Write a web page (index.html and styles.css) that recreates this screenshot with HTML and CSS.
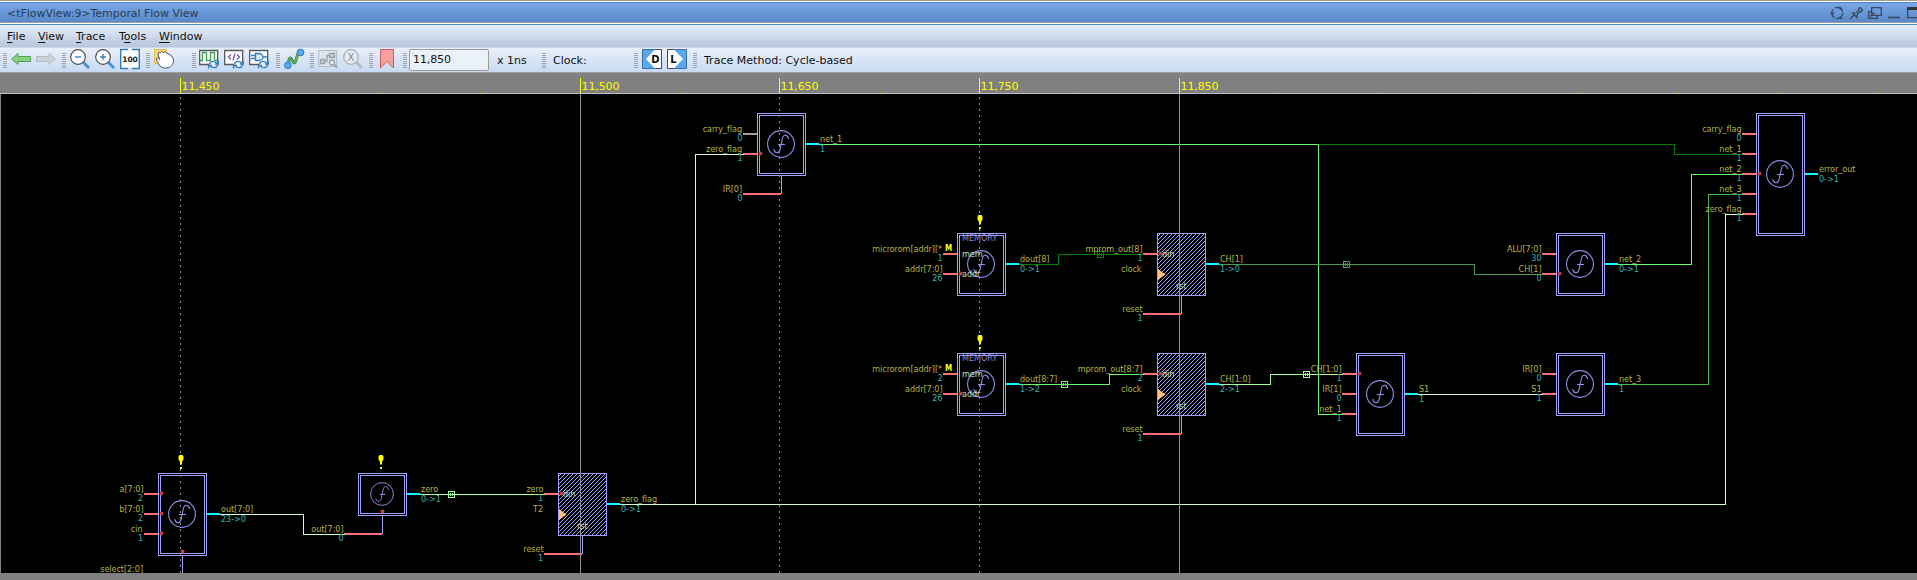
FILE: index.html
```html
<!DOCTYPE html>
<html lang="en">
<head>
<meta charset="utf-8">
<title>Temporal Flow View</title>
<link rel="stylesheet" href="styles.css">
</head>
<body>
<div class="window">
  <header class="titlebar">
    <span class="title">&lt;tFlowView:9&gt;Temporal Flow View</span>
    <svg class="controls" width="87" height="14" viewBox="0 0 87 14">
      <g fill="none" stroke="#39485c" stroke-width="1.3">
        <circle cx="7.300" cy="7" r="5.500" stroke-dasharray="9.500 2"/>
        <path d="M.8 6.500l1.400 2 1.600-1.800M9.500.8l1.800 1.800-1.800 1M10 10.500l.5 2 2-.8" stroke-width="1.200"/>
        <path d="M20 13l4-4M22 6.500l5.500 5.500M23 7.500l3.500-1L29 4l-.5-1.500L30 1.500 32.500 4l-1 1.500L30 5.500 27.500 8l-1 3"/>
        <path d="M41.700 1.700h9.600v7.600h-9.600zM41 5.700h-2.300v6.600h8.600V10M40.500 10.500l4-4"/>
        <path d="M58 11.500h12" stroke-width="1.600"/>
        <path d="M77.700 1.700h12v10h-12z"/><path d="M77 2.500h12" stroke-width="3" stroke="#333"/>
      </g>
    </svg>
  </header>
  <nav class="menubar">
    <span class="m-file"><u>F</u>ile</span><span class="m-view"><u>V</u>iew</span><span class="m-trace"><u>T</u>race</span><span class="m-tools">T<u>o</u>ols</span><span><u>W</u>indow</span>
  </nav>
  <div class="toolbar">
    <div class="group g-nav"><i class="grip"></i>
      <svg width="20" height="22" viewBox="0 0 20 22"><path d="M.7 11L7 5.500V8.500h12.500v5H7v3z" fill="#86d17f" stroke="#4c9e55"/></svg>
      <svg width="20" height="22" viewBox="0 0 20 22"><path d="M19.300 11L13 5.500V8.500H.5v5H13v3z" fill="#cdd2d8" stroke="#b4bac2"/></svg>
    </div>
    <div class="group g-zoom"><i class="grip"></i>
      <svg width="20" height="22" viewBox="0 0 20 22"><path d="M13 14l6 6" stroke="#4a94d6" stroke-width="3"/><circle cx="8" cy="9" r="7.300" fill="#fff" stroke="#4c5057" stroke-width="1.200"/><path d="M5 9h6" stroke="#2e7cc4" stroke-width="1.300"/></svg>
      <svg width="20" height="22" viewBox="0 0 20 22"><path d="M13 14l6 6" stroke="#4a94d6" stroke-width="3"/><circle cx="8" cy="9" r="7.300" fill="#fff" stroke="#4c5057" stroke-width="1.200"/><path d="M5 9h6M8 6v6" stroke="#2e7cc4" stroke-width="1.300"/></svg>
      <svg width="20" height="22" viewBox="0 0 20 22"><path d="M8 1.500H.700V20.500H8M12 1.500h7.300v19H12" fill="#fff" stroke="#2e7cb8" stroke-width="1.400"/><path d="M8 2h4v18H8z" fill="#f2f7fc"/><text x="10" y="14" text-anchor="middle" class="hundred">100</text></svg>
    </div>
    <div class="group g-hand"><i class="grip"></i>
      <svg width="22" height="22" viewBox="0 0 22 22"><path d="M1.500 1.500h12v14h-12z" fill="#ffd978" stroke="#d8a830" stroke-dasharray="2 1"/><path d="M7 18C5 15 3 12 3.500 10.500S6 10 6.500 11.500L5 6c0-2 2-2 2.500-1 0-2 2.500-2 3 0 .5-2 3-1 3 .5C15 4.500 16 6 16 7c2-.500 4 2 4.500 5 .5 4-3 8-7 8-3 0-5-.500-6.500-2z" fill="#fff" stroke="#4c5057"/></svg>
    </div>
    <div class="group g-views"><i class="grip"></i>
      <svg width="20" height="22" viewBox="0 0 20 22"><path d="M.700 2.500h18v14H.700z" fill="#fff" stroke="#555a60" stroke-width="1.300"/><path d="M1 12.500h2.500v-8h4v8h4v-8h4v8H18" fill="none" stroke="#3f9a52" stroke-width="1.300"/><circle cx="14.500" cy="16.500" r="4" fill="#eaf3fc"/><path d="M10.500 16c1-3.500 6-3.500 7.500-.5M18.500 17c-1 3.500-6 3.500-7.500.5M16 16h3.500v-3M13 17.500H9.500v3" fill="none" stroke="#2e7cc4" stroke-width="1.300"/></svg>
      <svg width="20" height="22" viewBox="0 0 20 22"><path d="M.700 2.500h18v14H.700z" fill="#fff" stroke="#555a60" stroke-width="1.300"/><path d="M7 6.500l-2.500 2.500L7 11.500M11 5.500l-2 7M13 6.500l2.500 2.500-2.500 2.500" fill="none" stroke="#7050b8" stroke-width="1.200"/><circle cx="14.500" cy="16.500" r="4" fill="#eaf3fc"/><path d="M10.500 16c1-3.500 6-3.500 7.500-.5M18.500 17c-1 3.500-6 3.500-7.500.5M16 16h3.500v-3M13 17.500H9.500v3" fill="none" stroke="#2e7cc4" stroke-width="1.300"/></svg>
      <svg width="20" height="22" viewBox="0 0 20 22"><path d="M.700 2.500h18v14H.700z" fill="#fff" stroke="#555a60" stroke-width="1.300"/><path d="M6.500 5.500h3c3 0 4.500 2 4.500 3.500s-1.500 3.500-4.500 3.500h-3zM2 7.500h4M2 10.500h4M14 9h4" fill="#d8ecfc" stroke="#2e7cc4" stroke-width="1.300"/><circle cx="14.500" cy="16.500" r="4" fill="#eaf3fc"/><path d="M10.500 16c1-3.500 6-3.500 7.500-.5M18.500 17c-1 3.500-6 3.500-7.500.5M16 16h3.500v-3M13 17.500H9.500v3" fill="none" stroke="#2e7cc4" stroke-width="1.300"/></svg>
    </div>
    <div class="group g-path"><i class="grip"></i>
      <svg width="21" height="22" viewBox="0 0 21 22"><path d="M4 17c1-5 1-7 2.500-7s2 5 4 5 2-10 5-11" fill="none" stroke="#3c8c4c" stroke-width="3"/><path d="M4 17c1-5 1-7 2.500-7s2 5 4 5 2-10 5-11" fill="none" stroke="#7cc47c"/><circle cx="16.500" cy="4.500" r="3.400" fill="#5aa8e8" stroke="#2e7cc4"/><circle cx="3.900" cy="17.300" r="3.400" fill="#5aa8e8" stroke="#2e7cc4"/></svg>
    </div>
    <div class="group g-off"><i class="grip"></i>
      <svg width="20" height="22" viewBox="0 0 20 22"><path d="M.700 2.500h18v16H.700z" fill="#dde4ec" stroke="#b4bac2"/><path d="M2.500 11.500h4v4h-4zM11.500 5.500h5v4h-5zM6.500 13.500h2.500v-6h2.500" fill="#c8ced6" stroke="#9aa1aa" stroke-width="1.300"/><circle cx="14" cy="14.500" r="2.500" fill="#edf2f7" stroke="#9aa1aa" stroke-width="1.300"/><path d="M16 16.500l3 3" stroke="#9aa1aa" stroke-width="2"/></svg>
      <svg width="21" height="22" viewBox="0 0 21 22"><path d="M13 14l6 6" stroke="#b4bac2" stroke-width="3"/><circle cx="8" cy="9" r="7.300" fill="#e4eaf1" stroke="#a7adb5" stroke-width="1.200"/><text x="8" y="13" text-anchor="middle" class="xmark">X</text></svg>
    </div>
    <div class="group g-mark"><i class="grip"></i>
      <svg width="14" height="22" viewBox="0 0 14 22"><path d="M.5 1.500h13v18.500L7 13.500.5 20z" fill="#f7a0a0" stroke="#d25a5c"/></svg>
    </div>
    <div class="group g-time"><i class="grip"></i><div class="field">11,850</div><span>x 1ns</span></div>
    <div class="group g-clock"><i class="grip"></i><span>Clock:</span></div>
    <div class="group g-dl"><i class="grip"></i>
      <svg width="20" height="22" viewBox="0 0 20 22"><path d="M.5 1.500h19v19H.5z" fill="#5aa8ea" stroke="#3a6ea8"/><path d="M19.500 1.500v19H13L4 11l9-9.500z" fill="#fff"/><path d="M13 1.500h6.500v19H13" fill="none" stroke="#444a52"/><text x="13.500" y="14.500" text-anchor="middle" class="flag">D</text></svg>
      <svg width="20" height="22" viewBox="0 0 20 22"><path d="M.5 1.500h19v19H.5z" fill="#5aa8ea" stroke="#3a6ea8"/><path d="M.5 1.500v19H7l9-9.500-9-9.500z" fill="#fff"/><path d="M7 1.500H.5v19H7" fill="none" stroke="#444a52"/><text x="6.500" y="14.500" text-anchor="middle" class="flag">L</text></svg>
    </div>
    <div class="group g-method"><i class="grip"></i><span>Trace Method: Cycle-based</span></div>
  </div>

  <svg class="ruler" width="1917" height="22" viewBox="0 72 1917 22">
    <path d="M0 72.500h1917" stroke="#a09c98"/>
    <path d="M0 93.500h1917" stroke="#c0c0c0"/>
    <path class="tick" d="M81.500 93v1M281.500 93v1M380.500 93v1M480.500 93v1M680.500 93v1M880.500 93v1M1079.500 93v1M1279.500 93v1M1379.500 93v1M1479.500 93v1M1578.500 93v1M1678.500 93v1M1778.500 93v1M1878.500 93v1"/>
    <path class="tick" d="M180.500 78v15M580.500 78v15M779.500 78v15M979.500 78v15M1179.500 78v15"/>
    <text x="181.500" y="90">11,450</text><text x="581.500" y="90">11,500</text><text x="780.500" y="90">11,650</text><text x="980.500" y="90">11,750</text><text x="1180.500" y="90">11,850</text>
  </svg>

  <svg class="canvas" width="1917" height="479" viewBox="0 94 1917 479">
    <defs>
      <pattern id="hatch" width="4" height="4" patternUnits="userSpaceOnUse"><path d="M0 3h1v1H0zM1 2h1v1H1zM2 1h1v1H2zM3 0h1v1H3z" fill="#a0a0ff"/></pattern>
      <g id="fn"><circle r="13.400"/><path d="M7.700-5C6.500-9.500 2.500-10.500 1.300-5L-.8 5C-2 10-6 10-7.300 5.200"/><path d="M-3 .5H4"/></g>
      <g id="warn"><path d="M-2.500 1.500L-1.500 0h3l1 1.500v3L1 7v2.500h-2V7l-1.500-2.500z"/><rect x="-1" y="12" width="2" height="2"/></g>
      <g id="junction"><rect x=".5" y=".5" width="6" height="6"/><path d="M2 2l3 3M5 2l-3 3"/></g>
      <g id="ff"><rect x=".5" y=".5" width="48" height="62"/></g>
      <g id="b42"><rect x=".5" y=".5" width="48" height="42"/><rect x="2.500" y="2.500" width="44" height="38"/></g>
      <g id="b62"><rect x=".5" y=".5" width="48" height="62"/><rect x="2.500" y="2.500" width="44" height="58"/></g>
      <g id="b82"><rect x=".5" y=".5" width="48" height="82"/><rect x="2.500" y="2.500" width="44" height="78"/></g>
      <g id="b122"><rect x=".5" y=".5" width="48" height="122"/><rect x="2.500" y="2.500" width="44" height="118"/></g>
    </defs>

    <!-- blocks -->
    <g class="block">
      <use href="#b62" x="757" y="113"/><use href="#b122" x="1756" y="113"/>
      <use href="#b62" x="957" y="233"/><use href="#b62" x="957" y="353"/>
      <use href="#b62" x="1556" y="233"/><use href="#b62" x="1556" y="353"/>
      <use href="#b82" x="1356" y="353"/><use href="#b82" x="158" y="473"/><use href="#b42" x="358" y="473"/>
    </g>
    <g class="register">
      <use href="#ff" x="1157" y="233"/><use href="#ff" x="1157" y="353"/><use href="#ff" x="558" y="473"/>
    </g>
    <g class="fn">
      <use href="#fn" x="781" y="144"/><use href="#fn" x="1780" y="174"/><use href="#fn" x="981" y="264"/><use href="#fn" x="981" y="384"/>
      <use href="#fn" x="1580" y="264"/><use href="#fn" x="1580" y="384"/><use href="#fn" x="1380" y="394"/><use href="#fn" x="182" y="514"/>
      <use href="#fn" transform="translate(382 494) scale(.85)"/>
    </g>

    <!-- pins -->
    <path class="drop" d="M781.500 176v18M1181.500 296v18M1181.500 416v18M582.500 536v18M382.500 516v18M182.500 556v17"/>
    <path class="pin idle" d="M743 134h14"/>
    <path class="pin" d="M743 154h14M743 194h38M943 254h14M943 274h14M943 374h14M943 394h14M1143 254h14M1143 374h14M1143 314h38M1143 434h38M1342 374h14M1342 394h14M1342 414h14M1542 254h14M1542 274h14M1542 374h14M1542 394h14M1742 134h14M1742 154h14M1742 174h14M1742 194h14M1742 214h14M144 494h14M144 514h14M144 534h14M344 534h38M544 494h14M544 554h38"/>
    <path class="pin out" d="M806 144h13M1006 264h13M1006 384h13M1206 264h13M1206 384h13M1405 394h13M1605 264h13M1605 384h13M1805 174h13M207 514h13M407 494h13M607 504h13"/>

    <!-- nets -->
    <g class="wire">
      <path stroke="#008000" d="M1318 144.500H1674.500V154.500H1743M1019 264.500H1058.500V254.500H1144"/>
      <path stroke="#66ff66" d="M819 144.500H1318.500V414.500H1343M1019 384.500H1109.500V374.500H1144M1618 264.500H1691.500V174.500H1743"/>
      <path stroke="#509a50" d="M1219 264.500H1474.500V274.500H1543"/>
      <path stroke="#40c040" d="M1618 384.500H1708.500V194.500H1743"/>
      <path stroke="#a4ff98" d="M1219 384.500H1270.500V374.500H1343M420 494.500H545"/>
      <path stroke="#ccffcc" d="M1418 394.500H1543M220 514.500H303.500V534.500H345M620 504.500H1725.500V214.500H1743M695.500 504V154.500H744"/>
    </g>
    <g class="junction">
      <use href="#junction" x="1097" y="251" stroke="#008000"/><use href="#junction" x="1061" y="381" stroke="#66ff66"/>
      <use href="#junction" x="1343" y="261" stroke="#509a50"/><use href="#junction" x="1303" y="371" stroke="#a4ff98"/><use href="#junction" x="448" y="491" stroke="#a4ff98"/>
    </g>

    <!-- time cursors -->
    <path class="cursor dashed" d="M180.500 97V573M779.500 97V573M979.500 97V573"/>
    <path class="cursor" d="M580.500 94V573M1179.500 94V573"/>

    <g class="active">
      <circle cx="760.500" cy="153.500" r="2"/><circle cx="960.500" cy="273.500" r="2"/><circle cx="960.500" cy="393.500" r="2"/>
      <circle cx="1160.500" cy="253.500" r="2"/><circle cx="1160.500" cy="373.500" r="2"/><circle cx="1359.500" cy="373.500" r="2"/>
      <circle cx="1559.500" cy="273.500" r="2"/><circle cx="1759.500" cy="173.500" r="2"/>
      <circle cx="161.500" cy="493.500" r="2"/><circle cx="161.500" cy="513.500" r="2"/><circle cx="161.500" cy="533.500" r="2"/>
      <circle cx="182.500" cy="551.500" r="2"/><circle cx="382.500" cy="511.500" r="2"/><circle cx="561.500" cy="493.500" r="2"/>
    </g>
    <path fill="#ffc080" d="M1158 269l7.500 5.500-7.500 5.500zM1158 389l7.500 5.500-7.500 5.500zM559 509l7.500 5.500-7.500 5.500z"/>
    <g fill="#ffff00">
      <use href="#warn" x="980" y="215"/><use href="#warn" x="980" y="335"/><use href="#warn" x="181" y="455"/><use href="#warn" x="381" y="455"/>
      <text class="mem" x="945" y="251">M</text><text class="mem" x="945" y="371">M</text>
    </g>

    <g class="name in">
      <text x="742" y="132">carry_flag</text><text x="742" y="152">zero_flag</text><text x="742" y="192">IR[0]</text>
      <text x="942" y="252">microrom[addr][*</text><text x="942.500" y="272">addr[7:0]</text>
      <text x="942" y="372">microrom[addr][*</text><text x="942.500" y="392">addr[7:0]</text>
      <text x="1142.500" y="252">mprom_out[8]</text><text x="1141.500" y="272">clock</text><text x="1142.500" y="312">reset</text>
      <text x="1142.500" y="372">mprom_out[8:7]</text><text x="1141.500" y="392">clock</text><text x="1142.500" y="432">reset</text>
      <text x="1341.500" y="372">CH[1:0]</text><text x="1341.500" y="392">IR[1]</text><text x="1341.500" y="412">net_1</text>
      <text x="1541.500" y="252">ALU[7:0]</text><text x="1541.500" y="272">CH[1]</text><text x="1541.500" y="372">IR[0]</text><text x="1541.500" y="392">S1</text>
      <text x="1741.500" y="132">carry_flag</text><text x="1741.500" y="152">net_1</text><text x="1741.500" y="172">net_2</text><text x="1741.500" y="192">net_3</text><text x="1741.500" y="212">zero_flag</text>
      <text x="143.500" y="492">a[7:0]</text><text x="143.500" y="512">b[7:0]</text><text x="142.500" y="532">cin</text><text x="143" y="572">select[2:0]</text>
      <text x="343.500" y="532">out[7:0]</text><text x="543.500" y="492">zero</text><text x="543" y="512">T2</text><text x="543.500" y="552">reset</text>
    </g>
    <g class="name">
      <text x="820" y="142">net_1</text><text x="1020" y="262">dout[8]</text><text x="1020" y="382">dout[8:7]</text>
      <text x="1220" y="262">CH[1]</text><text x="1220" y="382">CH[1:0]</text><text x="1419" y="392">S1</text>
      <text x="1619" y="262">net_2</text><text x="1619" y="382">net_3</text><text x="1819" y="172">error_out</text>
      <text x="221" y="512">out[7:0]</text><text x="421" y="492">zero</text><text x="621" y="502">zero_flag</text>
    </g>
    <g class="value in">
      <text x="742.500" y="141">0</text><text x="742.500" y="161">1</text><text x="742.500" y="201">0</text>
      <text x="942.500" y="261">1</text><text x="942.500" y="281">26</text><text x="942.500" y="381">2</text><text x="942.500" y="401">26</text>
      <text x="1142.500" y="261">1</text><text x="1142.500" y="321">1</text><text x="1142.500" y="381">2</text><text x="1142.500" y="441">1</text>
      <text x="1341.500" y="381">1</text><text x="1341.500" y="401">0</text><text x="1341.500" y="421">1</text>
      <text x="1541.500" y="261">30</text><text x="1541.500" y="281">0</text><text x="1541.500" y="381">0</text><text x="1541.500" y="401">1</text>
      <text x="1741.500" y="141">0</text><text x="1741.500" y="161">1</text><text x="1741.500" y="181">1</text><text x="1741.500" y="201">1</text><text x="1741.500" y="221">1</text>
      <text x="143" y="501">2</text><text x="143" y="521">2</text><text x="143" y="541">1</text>
      <text x="343.500" y="541">0</text><text x="543" y="501">1</text><text x="543" y="561">1</text>
    </g>
    <g class="value">
      <text x="820" y="152">1</text><text x="1020" y="272">0-&gt;1</text><text x="1020" y="392">1-&gt;2</text>
      <text x="1220" y="272">1-&gt;0</text><text x="1220" y="392">2-&gt;1</text><text x="1419" y="402">1</text>
      <text x="1619" y="272">0-&gt;1</text><text x="1619" y="392">1</text><text x="1819" y="182">0-&gt;1</text>
      <text x="221" y="522">23-&gt;0</text><text x="421" y="502">0-&gt;1</text><text x="621" y="512">0-&gt;1</text>
    </g>
    <g class="kind"><text x="962" y="241">MEMORY</text><text x="962" y="361">MEMORY</text></g>
    <g class="port">
      <text x="962" y="257">mem</text><text x="962" y="277">addr</text><text x="962" y="377">mem</text><text x="962" y="397">addr</text>
      <text x="1162" y="257">din</text><text x="1176" y="289">rst</text><text x="1162" y="377">din</text><text x="1176" y="409">rst</text>
      <text x="563" y="497">din</text><text x="577" y="529">rst</text>
    </g>
  </svg>
</div>
</body>
</html>
```
FILE: styles.css
```css
body { margin: 0; background: #808080; overflow: hidden; }
.window { width: 1917px; height: 580px; overflow: hidden; font: 11px/14px "DejaVu Sans", sans-serif; color: #111; }
svg { display: block; flex: none; }

.titlebar {
  box-sizing: border-box; height: 25px; display: flex; align-items: center; justify-content: space-between;
  padding-left: 7px; color: #2b3b52;
  background: linear-gradient(#a09c98 0 1px, #fff 1px 2px, #4f84c8 2px 3px, #79a8e8 3px, #5888c8 22px, #a09c98 22px 23px, #fff 23px 24px, #4f84c8 24px);
}
.title { padding-top: 2px; letter-spacing: -.04px; }
.controls { overflow: hidden; }

.menubar {
  box-sizing: border-box; height: 23px; display: flex; align-items: center; padding-left: 7px;
  background: linear-gradient(#e6effc, #b8c6da 22px, #c8daf2 22px);
}
.menubar span { flex: none; }
.menubar u { text-underline-offset: 2px; }
.m-file { width: 31px; }
.m-view { width: 38px; }
.m-trace { width: 43px; }
.m-tools { width: 40px; }

.toolbar { height: 24px; display: flex; background: linear-gradient(#e8eff8, #c8daf4); }
.group { display: flex; align-items: center; flex: none; height: 24px; box-sizing: border-box; padding-bottom: 2px; gap: 5px; white-space: nowrap; }
.grip { width: 4px; height: 15px; margin-top: 2px; flex: none; background: repeating-linear-gradient(#a0a4a8 0 1px, transparent 1px 2px); }
.group span { padding-top: 3px; }
.g-nav { width: 62px; padding-left: 3px; box-sizing: border-box; }
.g-nav .grip { margin-right: -1px; }
.g-zoom { width: 84px; }
.g-zoom .grip { margin-right: -1px; }
.g-hand { width: 46px; gap: 3px; }
.g-views { width: 84px; }
.g-views .grip { margin-right: -2px; }
.g-path { width: 34px; gap: 4px; }
.g-off { width: 59px; }
.g-off .grip { margin-right: -1px; }
.g-mark { width: 34px; gap: 7px; }
.g-time { width: 139px; gap: 2px; }
.field {
  box-sizing: border-box; width: 80px; height: 22px; margin-top: 1px; padding: 3px 0 0 3px;
  border: 1px solid #a09c98; border-radius: 2px; background: #eaf1f9; letter-spacing: -.1px;
}
.g-time span { margin-left: 6px; }
.g-clock { width: 92px; gap: 7px; }
.g-dl { width: 59px; }
.g-dl .grip { margin-right: -1px; }
.g-method { gap: 7px; letter-spacing: .02px; }
.hundred { font: bold 7.500px "DejaVu Sans", sans-serif; fill: #222; }
.xmark { font: 10px "DejaVu Sans", sans-serif; fill: #8a9098; }
.flag { font: bold 10px "DejaVu Sans", sans-serif; fill: #111; }

.ruler { background: #808080; font-size: 11px; letter-spacing: -.1px; fill: #ffff00; }
.tick { stroke: #ffff00; shape-rendering: crispEdges; }

.canvas {
  background: #000; box-shadow: inset 1px 0 #808080;
  font: 9px "DejaVu Sans Condensed", "DejaVu Sans", sans-serif; font-stretch: condensed; letter-spacing: -.06px;
}
.block, .register { fill: none; stroke: #a0a0ff; shape-rendering: crispEdges; }
.register { fill: url(#hatch); }
.fn { fill: none; stroke: #9090e8; stroke-width: 1.1; }
.pin { stroke: #ff7070; stroke-width: 2; shape-rendering: crispEdges; }
.idle { stroke: #a09c98; }
.out { stroke: #00ffff; }
.drop { stroke: #a0a0ff; shape-rendering: crispEdges; }
.wire, .junction { fill: none; shape-rendering: crispEdges; }
.cursor { stroke: #909090; shape-rendering: crispEdges; }
.dashed { stroke-dasharray: 2 4; }
.active { fill: #c04040; }
.name { fill: #b4b440; }
.value { fill: #30b4b4; }
.in { text-anchor: end; }
.kind { fill: #8888e0; }
.port { fill: #c0e0c0; }
.mem { font-weight: bold; font-size: 8px; }
```
